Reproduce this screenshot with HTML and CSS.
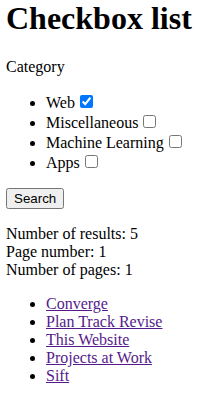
FILE: index.html
```html
<!DOCTYPE html>
<html lang="en">
<head>
    <meta charset="UTF-8">
    <meta name="viewport" content="width=device-width, initial-scale=1.0">
    <title>Checkbox list</title>
    <link rel="stylesheet" href="styles.css">
</head>
<body>
    <h1>Checkbox list</h1>
    <form>
        <p>Category</p>
        <ul>
            <li>Web <input type="checkbox" name="category" value="web" checked></li>
            <li>Miscellaneous <input type="checkbox" name="category" value="misc"></li>
            <li>Machine Learning <input type="checkbox" name="category" value="ml"></li>
            <li>Apps <input type="checkbox" name="category" value="apps"></li>
        </ul>
        <button type="submit">Search</button>
    </form>
    <p>
        Number of results: 5<br>
        Page number: 1<br>
        Number of pages: 1
    </p>
    <ul>
        <li><a class="visited" href="#">Converge</a></li>
        <li><a class="visited" href="#">Plan Track Revise</a></li>
        <li><a class="visited" href="#">This Website</a></li>
        <li><a class="visited" href="#">Projects at Work</a></li>
        <li><a class="visited" href="#">Sift</a></li>
    </ul>
</body>
</html>
```

FILE: styles.css
```css
body {
    font-family: "Liberation Serif", "Times New Roman", serif;
    margin: 0 6px 8px;
}
h1 {
    margin-top: 0;
}
input[type="checkbox"] {
    margin: 3px 3px 3px 1px;
}
button {
    font-family: "Liberation Sans", Arial, sans-serif;
    font-size: 13.33px;
}
a.visited {
    color: #551a8b;
}
```
